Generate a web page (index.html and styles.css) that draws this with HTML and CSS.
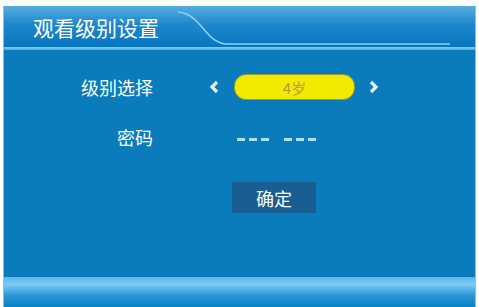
FILE: index.html
```html
<!DOCTYPE html>
<html lang="zh">
<head>
<meta charset="utf-8">
<link rel="stylesheet" href="styles.css">
</head>
<body>
<div class="panel">
  <div class="header">
    <div class="title">观看级别设置</div>
    <svg class="tabline" width="471" height="44" viewBox="0 0 471 44">
      <path d="M174 6 C 198 8, 200 36, 222 38 L 446 38" fill="none" stroke="#8fd0f4" stroke-width="1.6"/>
    </svg>
  </div>
  <div class="sep"></div>
  <div class="body">
    <div class="row r1">
      <div class="label">级别选择</div>
      <div class="selector">
        <svg class="arrow" width="12" height="14" viewBox="0 0 12 14"><path d="M9 2 L4 7 L9 12" fill="none" stroke="#e0f4ff" stroke-width="3.2" stroke-linejoin="miter" stroke-linecap="butt"/></svg>
        <div class="pill">4岁</div>
        <svg class="arrow" width="12" height="14" viewBox="0 0 12 14"><path d="M3 2 L8 7 L3 12" fill="none" stroke="#e0f4ff" stroke-width="3.2" stroke-linejoin="miter" stroke-linecap="butt"/></svg>
      </div>
    </div>
    <div class="row r2">
      <div class="label">密码</div>
      <div class="dashes">
        <div class="group"><i></i><i></i><i></i></div>
        <div class="group"><i></i><i></i><i></i></div>
      </div>
    </div>
    <div class="btnrow"><div class="btn">确定</div></div>
  </div>
  <div class="footer"></div>
</div>
</body>
</html>
```
FILE: styles.css
```css
html, body { margin: 0; padding: 0; background: #ffffff; }
body { width: 479px; height: 307px; overflow: hidden; font-family: "Noto Sans CJK SC", "Noto Sans", sans-serif; }
.panel {
  margin: 6px 4px 0 4px;
  height: 301px;
  background: #0a7cbb;
  display: flex;
  flex-direction: column;
  box-shadow: -1px 0 0 #7cc6ee, 1px 0 0 #7cc6ee;
}
.header {
  position: relative;
  height: 41px;
  background: linear-gradient(to bottom, #56ade0 0%, #1d87cb 45%, #0776c1 100%);
  display: flex;
  align-items: center;
}
.title {
  color: #ffffff;
  font-size: 21px;
  padding-left: 29px;
  line-height: 1;
  margin-top: 1px;
}
.tabline { position: absolute; left: 0; top: 0; }
.sep { height: 3px; background: linear-gradient(to bottom, #8ad0f5, #4aa8de); }
.body { flex: 1; display: flex; flex-direction: column; }
.row { display: flex; align-items: center; }
.r1 { margin-top: 24px; height: 26px; }
.r2 { margin-top: 24px; height: 26px; }
.label {
  width: 149px;
  text-align: right;
  color: #ffffff;
  font-size: 18px;
  line-height: 1;
}
.selector { display: flex; align-items: center; margin-left: 55px; }
.arrow { display: block; }
.pill {
  margin: 0 13px 0 14px;
  width: 119px;
  height: 24px;
  border-radius: 12px;
  background: #f2ea00;
  border: 1px solid #9c9a2a;
  color: #b89a3a;
  font-size: 15px;
  display: flex;
  align-items: center;
  justify-content: center;
  line-height: 1;
}
.dashes { margin-left: 84px; margin-top: 5px; display: flex; gap: 15px; }
.group { display: flex; gap: 4px; }
.group i { display: block; width: 8px; height: 3px; background: #a8e2ff; }
.btnrow { display: flex; margin-top: 32px; }
.btn {
  margin-left: 228px;
  width: 84px;
  height: 31px;
  background: #195e92;
  color: #ffffff;
  font-size: 18px;
  display: flex;
  align-items: center;
  justify-content: center;
  line-height: 1;
}
.footer {
  height: 30px;
  background: linear-gradient(to bottom, #5bb8ec 0%, #7ccaf5 25%, #2c97d8 60%, #0a80c6 100%);
}
```
